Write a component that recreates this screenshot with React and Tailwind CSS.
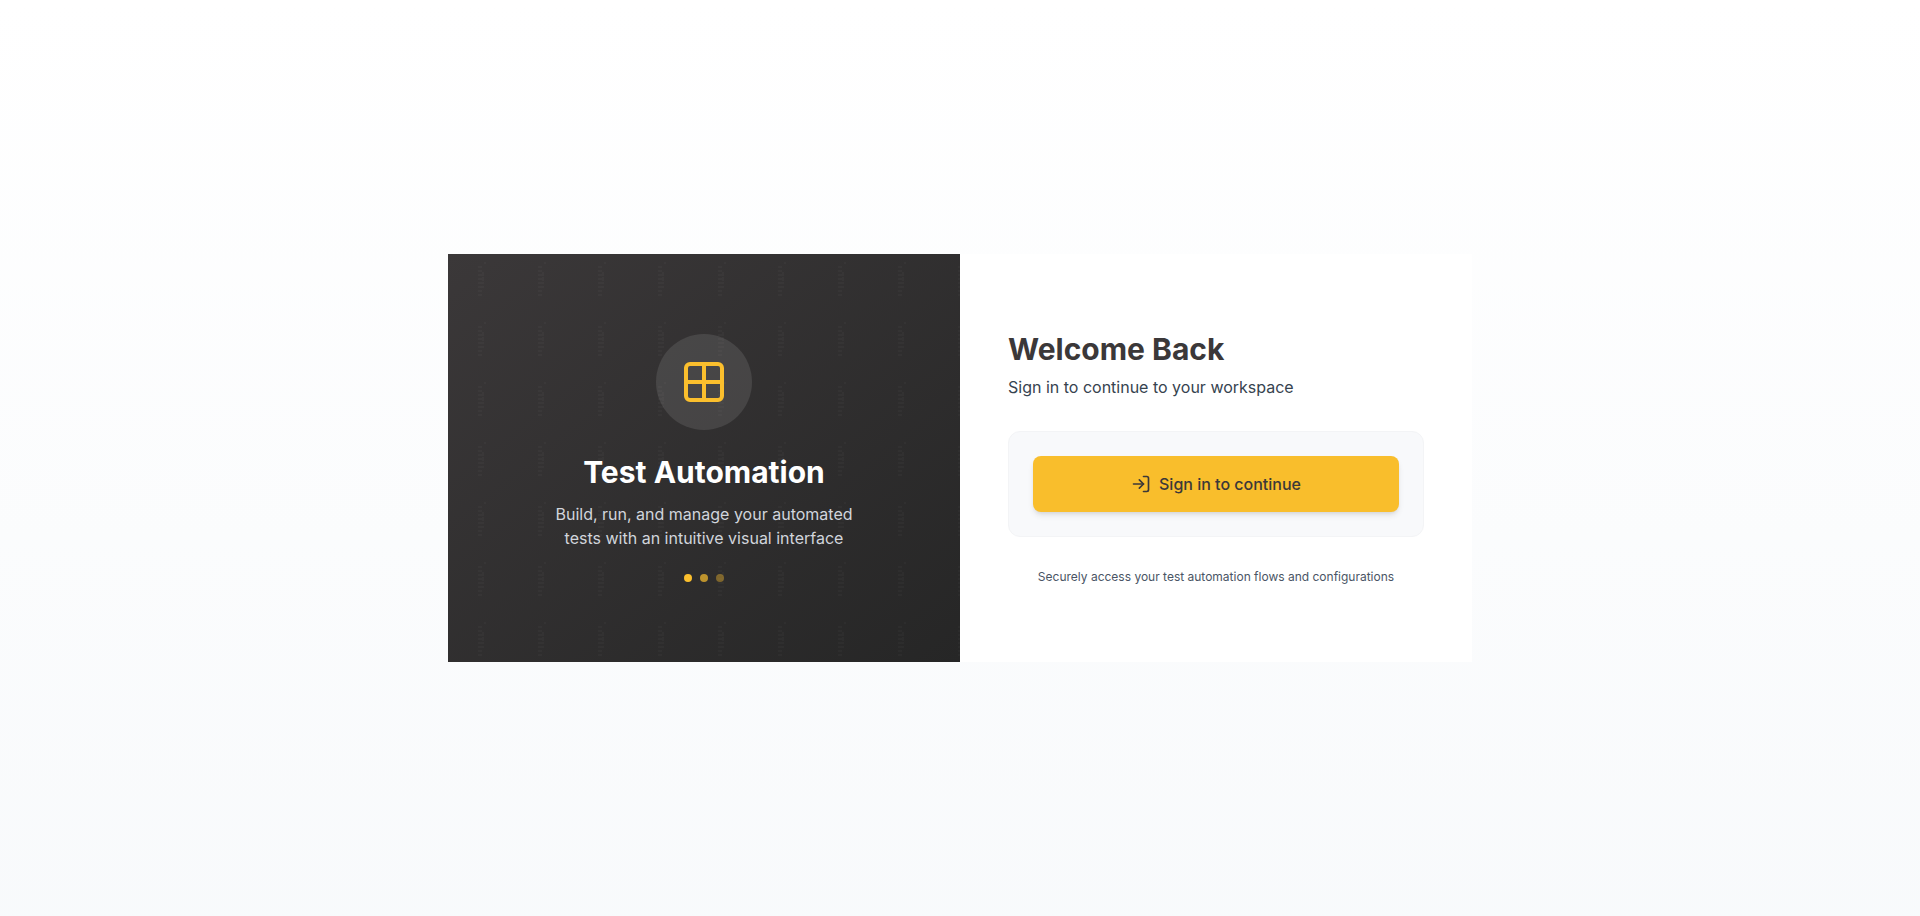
import { Grid2X2, LogIn } from "lucide-react";

function PanelPattern() {
  return (
    <svg className="absolute inset-0 h-full w-full text-white opacity-[0.025]" aria-hidden="true">
      <defs>
        <pattern id="ticks" width="60" height="60" patternUnits="userSpaceOnUse">
          <path
            fill="currentColor"
            d="M36 8h2v2h-2zM30 12h4v2h-4zM30 16h4v2h-4zM34 18h2v2h-2zM30 20h6v2h-6zM34 23h2v1h-2zM30 24h6v2h-6zM34 26h2v1h-2zM30 28h6v2h-6zM30 32h6v2h-6zM30 36h4v2h-4zM30 40h4v2h-4z"
          />
        </pattern>
      </defs>
      <rect width="100%" height="100%" fill="url(#ticks)" />
    </svg>
  );
}

function BrandPanel() {
  return (
    <section className="relative flex flex-col items-center justify-center bg-linear-to-br from-[#3b3839] to-[#262626] px-12 py-20 text-center">
      <PanelPattern />
      <div className="relative flex flex-col items-center">
        <div className="mb-6 flex size-24 items-center justify-center rounded-full bg-white/10">
          <Grid2X2 className="size-12 text-[#fbbf2d]" strokeWidth={2} aria-hidden="true" />
        </div>
        <h1 className="mb-3 text-3xl font-bold text-white">Test Automation</h1>
        <p className="max-w-xs text-base text-gray-300">
          Build, run, and manage your automated tests with an intuitive visual interface
        </p>
        <div className="mt-6 flex gap-2">
          <span className="size-2 rounded-full bg-[#fbbf2d]" />
          <span className="size-2 rounded-full bg-[#fbbf2d]/70" />
          <span className="size-2 rounded-full bg-[#fbbf2d]/40" />
        </div>
      </div>
    </section>
  );
}

function SignInPanel() {
  return (
    <section className="flex flex-col justify-center bg-white p-12">
      <h2 className="mb-2 text-3xl font-bold text-[#3b3839]">Welcome Back</h2>
      <p className="mb-8 text-base text-[#36434f]">Sign in to continue to your workspace</p>
      <div className="rounded-xl border border-gray-100 bg-[#f8f9fb] p-6">
        <button
          type="button"
          className="flex h-14 w-full items-center justify-center gap-2 rounded-lg bg-[#f9be2c] text-base font-medium text-[#3b3839] shadow-md"
        >
          <LogIn className="size-5" aria-hidden="true" />
          Sign in to continue
        </button>
      </div>
      <p className="mt-8 text-center text-xs text-gray-600">
        Securely access your test automation flows and configurations
      </p>
    </section>
  );
}

export default function App() {
  return (
    <main className="flex min-h-screen items-center justify-center bg-linear-to-b from-white to-slate-50 font-['Inter',sans-serif]">
      <div className="grid w-full max-w-5xl md:grid-cols-2">
        <BrandPanel />
        <SignInPanel />
      </div>
    </main>
  );
}
